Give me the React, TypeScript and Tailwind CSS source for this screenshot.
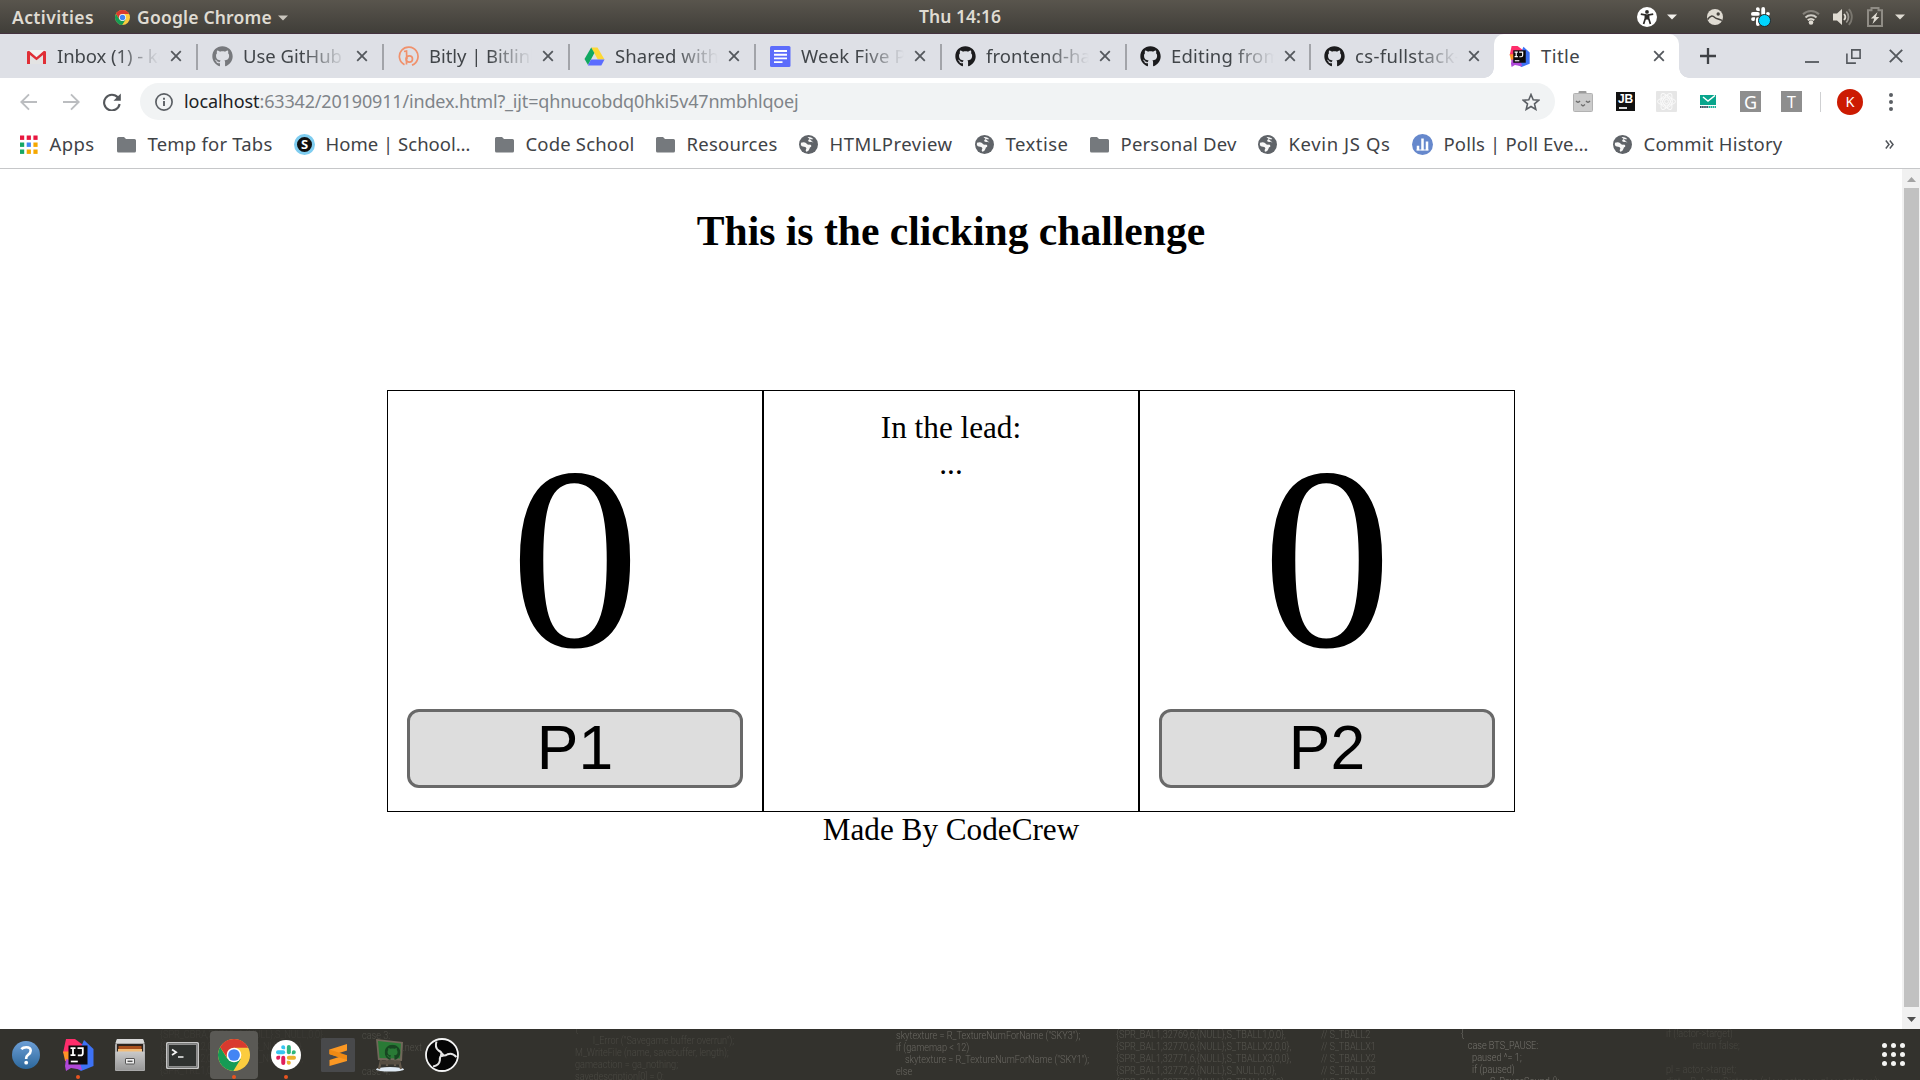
import React, { useLayoutEffect, useRef } from "react";
import { FaGithub } from "react-icons/fa";

const UI = "font-['Noto_Sans','Open_Sans',sans-serif]";

/* Single line of text whose tracking is adjusted so that it spans `w` pixels. */
function Fit({ w, children, className = "" }: { w: number; children: string; className?: string }) {
  const ref = useRef<HTMLSpanElement>(null);
  useLayoutEffect(() => {
    const el = ref.current;
    if (!el) return;
    el.style.letterSpacing = "0px";
    const natural = el.getBoundingClientRect().width;
    el.style.letterSpacing = `${(w - natural) / children.length}px`;
  }, [w, children]);
  return (
    <span ref={ref} className={`inline-block whitespace-pre ${className}`}>
      {children}
    </span>
  );
}

/* ---------- shared icons ---------- */

function Chrome({ className }: { className: string }) {
  return (
    <svg viewBox="0 0 48 48" className={className}>
      <circle cx="24" cy="24" r="24" fill="#fbcc3f" />
      <path d="M3.2 12A24 24 0 0 0 23 48L34 30 24 24 14 29.5z" fill="#169b55" />
      <path d="M3.2 12A24 24 0 0 1 45.2 13H24L13 27z" fill="#d93a2f" />
      <circle cx="24" cy="24" r="11" fill="#fff" />
      <circle cx="24" cy="24" r="8.8" fill="#4285f4" />
    </svg>
  );
}

function SlackMark({ className, mono = false }: { className: string; mono?: boolean }) {
  const c = mono ? ["#fff", "#fff", "#fff", "#fff"] : ["#36c5f0", "#2eb67d", "#ecb22e", "#e01e5a"];
  return (
    <svg viewBox="0 0 24 24" className={className}>
      <g fill={c[0]}>
        <rect x="0" y="6.3" width="11" height="4.8" rx="2.4" />
        <path d="M11 5H8.6A2.4 2.4 0 1 1 11 2.4z" />
      </g>
      <g fill={c[1]}>
        <rect x="13" y="0" width="4.8" height="11" rx="2.4" />
        <path d="M19 11V8.6A2.4 2.4 0 1 1 21.6 11z" />
      </g>
      <g fill={c[2]}>
        <rect x="13" y="13" width="11" height="4.8" rx="2.4" />
        <path d="M13 19h2.4A2.4 2.4 0 1 1 13 21.6z" />
      </g>
      <g fill={c[3]}>
        <rect x="6.3" y="13" width="4.8" height="11" rx="2.4" />
        <path d="M5 13v2.4A2.4 2.4 0 1 1 2.4 13z" />
      </g>
    </svg>
  );
}

function Caret({ className = "" }: { className?: string }) {
  return (
    <svg viewBox="0 0 10 6" className={`h-[6px] w-[10px] ${className}`}>
      <path d="M0 .5h10L5 5.5z" fill="currentColor" />
    </svg>
  );
}

/* ---------- GNOME top bar ---------- */

function TopBar() {
  return (
    <div className={`flex h-[34px] items-center border-b border-[#44323f] bg-gradient-to-b from-[#59554d] to-[#403e39] text-[17.5px] font-semibold text-[#dfdbd2] ${UI}`}>
      <div className="flex w-[919px] items-center pt-[2px] pl-3">
        <Fit w={82}>Activities</Fit>
        <Chrome className="ml-[21px] h-[15px] w-[15px]" />
        <Fit w={135} className="ml-[7px]">Google Chrome</Fit>
        <Caret className="ml-[6px] text-[#c9c5bd]" />
      </div>
      <Fit w={82}>Thu 14:16</Fit>
      <div className="ml-auto flex items-center">
        <svg viewBox="0 0 20 20" className="h-5 w-5">
          <circle cx="10" cy="10" r="10" fill="#fff" />
          <circle cx="10" cy="4.9" r="1.9" fill="#2d2b28" />
          <path d="M3.8 7.2 8.4 8v3.2L6.6 17M16.2 7.2 11.6 8v3.2l1.8 5.8" stroke="#2d2b28" strokeWidth="1.7" fill="none" />
          <path d="M8 7.4h4v5.2H8z" fill="#2d2b28" />
        </svg>
        <Caret className="ml-[10px] text-[#f2f0ec]" />
        <svg viewBox="0 0 16 16" className="ml-[30px] h-4 w-4">
          <circle cx="8" cy="8" r="8" fill="#dfdbd2" />
          <path d="M.6 10.5C3 6.5 5.500 6.300 7.800 8.500 9.500 10 11.500 9.800 15 11.400" stroke="#45423d" strokeWidth="1.5" fill="none" />
          <circle cx="11.200" cy="5" r="1.700" fill="#45423d" />
        </svg>
        <div className="relative ml-[28px] h-5 w-5">
          <SlackMark mono className="h-[19px] w-[19px]" />
          <span className="absolute top-[7px] left-[7px] h-[13px] w-[13px] rounded-full border-[1.5px] border-[#22292c] bg-[#00d5ff]" />
        </div>
        <svg viewBox="0 0 18 16" className="ml-[31px] h-4 w-[18px]" fill="none" strokeWidth="2">
          <path d="M1 5.200a11.500 11.500 0 0 1 16 0" stroke="#85827b" />
          <path d="M3.500 8.400a8 8 0 0 1 11 0" stroke="#cfccc5" />
          <path d="M5.800 11.200a4.600 4.600 0 0 1 6.400 0" stroke="#dfdbd2" />
          <circle cx="9" cy="13.500" r="2.300" fill="#dfdbd2" />
        </svg>
        <svg viewBox="0 0 20 18" className="ml-[13px] h-[18px] w-5" fill="none" strokeWidth="1.8">
          <path d="M0 5.500h4L9 1v16l-5-4.500H0z" fill="#dfdbd2" />
          <path d="M11 6a4.500 4.500 0 0 1 0 6" stroke="#dfdbd2" />
          <path d="M13.300 3.500a8 8 0 0 1 0 11" stroke="#9b9891" />
          <path d="M15.800 1.200a11.500 11.500 0 0 1 0 15.600" stroke="#7a776f" />
        </svg>
        <svg viewBox="0 0 16 20" className="ml-[14px] h-5 w-4">
          <path d="M1 3.200h3.500V1h7v2.200H15V19H1z" fill="none" stroke="#8f8c85" strokeWidth="2" />
          <path d="M10.500 5 3.800 11.500h3.400L5.500 17l6.800-7H8.900z" fill="#dfdbd2" />
        </svg>
        <Caret className="mr-[15px] ml-3 text-[#dfdbd2]" />
      </div>
    </div>
  );
}

/* ---------- browser tabs ---------- */

function Gmail() {
  return (
    <svg viewBox="0 0 21 21" className="h-[21px] w-[21px]">
      <rect x="1" y="4" width="19" height="14" rx="1" fill="#f1f1f1" />
      <path d="M3.500 6 10.500 12l7-6v12h-14z" fill="#e3e3e3" />
      <path d="M1 18V5.500l2-.7 7.500 6.400L18 4.800l2 .7V18h-3V9l-6.500 5.300L4 9v9z" fill="#e02f36" />
    </svg>
  );
}

function Bitly() {
  return (
    <svg viewBox="0 0 21 21" className="h-[21px] w-[21px]" fill="none" stroke="#f0916c" strokeWidth="1.700">
      <path d="M6.500 18.700a9.300 9.300 0 1 1 7.500.4" />
      <path d="M6 5.500 8.500 5l.3 8" />
      <circle cx="11.300" cy="13" r="3.200" />
      <path d="M8.500 12v6.500" />
    </svg>
  );
}

function Drive() {
  return (
    <svg viewBox="0 0 21 21" className="h-[21px] w-[21px]">
      <path d="M7.200 1.500h6.300l7 12h-6.700z" fill="#fdd835" />
      <path d="M7.200 1.500 10.400 7 4 19 .5 13z" fill="#11a861" />
      <path d="M7 13.500h13.500L17.300 19.500H3.800z" fill="#5b6cff" />
    </svg>
  );
}

function Docs() {
  return (
    <svg viewBox="0 0 21 21" className="h-[21px] w-[21px]">
      <rect x="0" y="0" width="20.500" height="21" rx="1.500" fill="#5c6cfb" />
      <path d="M4 5h13M4 8.700h13M4 12.400h13M4 16.100h8.500" stroke="#fff" strokeWidth="1.900" />
    </svg>
  );
}

function Intellij({ className }: { className: string }) {
  return (
    <svg viewBox="0 0 32 32" className={className}>
      <path d="M4 0h9l8 6-6 14-14-6z" fill="#ff2d6b" />
      <path d="M1 12.500h11l-3 14-6-5z" fill="#ff9226" />
      <path d="M22 1l9.500 9v17L19 32l-8-5z" fill="#3d72f5" />
      <path d="M4 20l14 4 2 7-5-1-6-1-5 3-1-5z" fill="#b048d8" />
      <rect x="6.500" y="6.500" width="19" height="19" fill="#0c0a0b" />
      <path d="M8.500 9.200h5M11 9.200v7M8.500 16.200h5M15.500 9.200h5.300v5q0 2.200-2.200 2.200h-2.800" stroke="#fff" strokeWidth="1.800" fill="none" />
      <path d="M8.800 22.500h7" stroke="#fff" strokeWidth="1.700" />
    </svg>
  );
}

function CloseX() {
  return (
    <svg viewBox="0 0 12 12" className="h-3 w-3">
      <path d="M1.200 1.200l9.600 9.600M10.800 1.200l-9.600 9.600" stroke="#54585d" strokeWidth="1.800" />
    </svg>
  );
}

type TabInfo = { width: string; icon: React.ReactNode; text: string; w: number; last?: boolean };

const octo = (color: string) => <FaGithub className={`h-[21px] w-[21px] ${color}`} />;

const tabs: TabInfo[] = [
  { width: "w-[186px]", icon: <Gmail />, text: "Inbox (1) - ke", w: 111 },
  { width: "w-[186px]", icon: octo("text-[#77797d]"), text: "Use GitHub", w: 99 },
  { width: "w-[186px]", icon: <Bitly />, text: "Bitly | Bitlink", w: 111 },
  { width: "w-[186px]", icon: <Drive />, text: "Shared with", w: 104 },
  { width: "w-[186px]", icon: <Docs />, text: "Week Five P", w: 105 },
  { width: "w-[185px]", icon: octo("text-[#1b1b1d]"), text: "frontend-ha", w: 105 },
  { width: "w-[184px]", icon: octo("text-[#1b1b1d]"), text: "Editing from", w: 110 },
  { width: "w-[184px]", icon: octo("text-[#1b1b1d]"), text: "cs-fullstack-", w: 106, last: true },
];

function TabStrip() {
  return (
    <div className={`flex h-[44px] bg-[#dee0e6] pl-[11px] text-[18.5px] text-[#414549] ${UI}`}>
      {tabs.map((t, i) => (
        <div key={t.text} className={`relative flex shrink-0 items-center ${i > 4 ? "pl-[14px]" : "pl-[15px]"} ${t.width}`}>
          {t.icon}
          <div className="ml-[10px] w-[103px] overflow-hidden [mask-image:linear-gradient(to_right,#000_58%,transparent_100%)]">
            <Fit w={t.w}>{t.text}</Fit>
          </div>
          <div className="ml-[10px]"><CloseX /></div>
          {!t.last && <span className="absolute top-[10px] right-[-1px] h-[26px] w-[2px] bg-[#a2a4a9]" />}
        </div>
      ))}
      <div className="relative flex w-[185px] shrink-0 items-center rounded-t-[10px] bg-white pl-[15px]">
        <span className="absolute bottom-0 left-[-10px] h-[10px] w-[10px] bg-[radial-gradient(circle_at_0_0,#dee0e6_9.5px,#fff_10px)]" />
        <span className="absolute right-[-10px] bottom-0 h-[10px] w-[10px] bg-[radial-gradient(circle_at_100%_0,#dee0e6_9.5px,#fff_10px)]" />
        <Intellij className="h-[21px] w-[21px]" />
        <Fit w={39} className="ml-[11px]">Title</Fit>
        <div className="mr-[14px] ml-auto"><CloseX /></div>
      </div>
      <div className="flex grow items-center pl-[21px] text-[#54585d]">
        <svg viewBox="0 0 16 16" className="h-4 w-4">
          <path d="M8 0v16M0 8h16" stroke="#3f4246" strokeWidth="2.300" />
        </svg>
        <svg viewBox="0 0 14 14" className="ml-[89px] h-[14px] w-[14px]">
          <path d="M0 13h14" stroke="currentColor" strokeWidth="1.800" />
        </svg>
        <svg viewBox="0 0 15 15" className="ml-[27px] h-[15px] w-[15px]" fill="none" stroke="currentColor" strokeWidth="1.600">
          <path d="M5.800.9h8.300v8.300H5.800z" />
          <path d="M.9 4.500v9.600h9" />
        </svg>
        <svg viewBox="0 0 14 14" className="ml-[28px] h-[14px] w-[14px]">
          <path d="M.8.8l12.400 12.400M13.200.8.8 13.200" stroke="currentColor" strokeWidth="1.900" />
        </svg>
      </div>
    </div>
  );
}

/* ---------- toolbar ---------- */

function Toolbar() {
  return (
    <div className={`flex h-[47px] items-center bg-white pl-5 ${UI}`}>
      <svg viewBox="0 0 18 18" className="h-[18px] w-[18px]" fill="none" stroke="#bbbdc0" strokeWidth="1.900">
        <path d="M17 9H1.500M9 1.300 1.300 9 9 16.700" />
      </svg>
      <svg viewBox="0 0 18 18" className="ml-6 h-[18px] w-[18px]" fill="none" stroke="#bbbdc0" strokeWidth="1.900">
        <path d="M1 9h15.500M9 1.300 16.700 9 9 16.700" />
      </svg>
      <svg viewBox="0 0 18 18" className="ml-[23px] h-[18px] w-[18px]">
        <path d="M15 4.700A7.800 7.800 0 1 0 16.600 11" fill="none" stroke="#54575b" strokeWidth="2.100" />
        <path d="M17.800.5v7.300h-7.300z" fill="#54575b" />
      </svg>
      <div className="ml-[19px] flex h-[37px] w-[1415px] items-center rounded-full bg-[#f1f3f4] pl-[15px] text-[18px]">
        <svg viewBox="0 0 18 18" className="h-[18px] w-[18px]" fill="none" stroke="#5b5f64" strokeWidth="1.700">
          <circle cx="9" cy="9" r="8.100" />
          <path d="M9 8v5M9 4.800v1.900" strokeWidth="1.900" />
        </svg>
        <Fit w={75.500} className="ml-[11px] text-[#202124]">localhost</Fit>
        <Fit w={539} className="text-[#7f8489]">:63342/20190911/index.html?_ijt=qhnucobdq0hki5v47nmbhlqoej</Fit>
        <svg viewBox="0 0 18 18" className="mr-[15px] ml-auto h-[18px] w-[18px]">
          <path d="M9 1.500l2.200 5.200 5.600.5-4.300 3.700 1.300 5.500L9 13.500l-4.800 2.900 1.300-5.500L1.200 7.200l5.600-.5z" fill="none" stroke="#5b5f64" strokeWidth="1.600" />
        </svg>
      </div>
      <svg viewBox="0 0 20 21" className="ml-[18px] h-[21px] w-5">
        <rect x="5.500" y="0" width="8" height="4" rx="1" fill="#9b9b9b" />
        <rect x=".5" y="2.500" width="19" height="18" rx="1" fill="#cbcbcb" stroke="#b2b2b2" />
        <path d="M3 10q2 2.500 4 0M13 10q2 2.500 4 0M8 13.500l2 1.500 2-1.500" stroke="#6b6b6b" strokeWidth="1.300" fill="none" />
      </svg>
      <div className="ml-[23px] flex h-[19px] w-[19px] flex-col items-center bg-[#111] font-['Liberation_Sans',sans-serif] text-[12px] leading-[14px] font-bold text-white">
        <Fit w={15}>JB</Fit>
        <span className="mt-px mr-[6px] h-[2px] w-2 bg-[#ddd]" />
      </div>
      <svg viewBox="0 0 21 21" className="ml-[21px] h-[21px] w-[21px]" fill="none" stroke="#fafafa" strokeWidth="1">
        <rect width="21" height="21" rx="1" fill="#e6e6e6" stroke="none" />
        <ellipse cx="10.500" cy="10.500" rx="9" ry="3.700" />
        <ellipse cx="10.500" cy="10.500" rx="9" ry="3.700" transform="rotate(60 10.500 10.500)" />
        <ellipse cx="10.500" cy="10.500" rx="9" ry="3.700" transform="rotate(120 10.500 10.500)" />
        <circle cx="10.500" cy="10.500" r="6" />
        <circle cx="10.500" cy="10.500" r="2" />
      </svg>
      <svg viewBox="0 0 16 14" className="ml-[23px] h-[14px] w-4">
        <rect width="16" height="10" fill="#08a58c" />
        <path d="M3 2l5 4 7-5.500" stroke="#fff" strokeWidth="1.500" fill="none" />
        <path d="M0 12h8" stroke="#334a5c" strokeWidth="2" strokeDasharray="1.600 .5" />
        <path d="M8.500 12H16" stroke="#1bb39b" strokeWidth="2" strokeDasharray="1.600 .5" />
      </svg>
      <div className="ml-6 grid h-[21px] w-[21px] place-items-center bg-[#8e8e8e] text-[18px] leading-none text-white">G</div>
      <div className="ml-5 grid h-[21px] w-[21px] place-items-center bg-[#8e8e8e] text-[16px] leading-none text-white">T</div>
      <span className="ml-[18px] h-5 w-px bg-[#cfd0d2]" />
      <div className="ml-4 grid h-[26px] w-[26px] place-items-center rounded-full bg-[#cc1b02] text-[14.5px] leading-none text-white">K</div>
      <div className="ml-[26px] flex flex-col gap-[3px]">
        <span className="h-1 w-1 rounded-full bg-[#5b5f64]" />
        <span className="h-1 w-1 rounded-full bg-[#5b5f64]" />
        <span className="h-1 w-1 rounded-full bg-[#5b5f64]" />
      </div>
    </div>
  );
}

/* ---------- bookmarks ---------- */

const appColors = ["#e8173f", "#e8173f", "#e8173f", "#16a765", "#4285f4", "#f5a800", "#16a765", "#f5a800", "#f5a800"];

function Apps() {
  return (
    <svg viewBox="0 0 21 21" className="h-[21px] w-[21px]">
      {appColors.map((c, i) => (
        <rect key={i} x={2 + (i % 3) * 6.700} y={1.500 + Math.floor(i / 3) * 7} width="4.200" height="4.400" fill={c} />
      ))}
    </svg>
  );
}

function Folder() {
  return (
    <svg viewBox="0 0 21 21" className="h-[21px] w-[21px]">
      <path d="M1 4.500q0-1.500 1.500-1.500h5.500l2 2h8.500q1.500 0 1.500 1.500v10.500q0 1.500-1.500 1.500h-16Q1 18.500 1 17z" fill="#75797d" />
    </svg>
  );
}

function Globe() {
  return (
    <svg viewBox="0 0 21 21" className="h-[21px] w-[21px]">
      <circle cx="10.500" cy="10.500" r="9.500" fill="#5f6368" />
      <path d="M3 8.800q3-1.300 5 .2 1.300 2.300 4 1.500 1.800.5 1.200 2.300-1.700.5-1.800 2.200-.8 2.600-3.200 2.800-1.200-1.200.2-3.200-.2-1.900-2.400-1.800-2.600-.2-3.200-1.800zM9.500 3q3.500-.5 5.800 2-1 .4-2.500 0-2.600.2-2.800 2 1.600 1.300 3.500.8 2.300.6 3.600 2.500" fill="#fff" fillOpacity=".95" />
    </svg>
  );
}

function Schoology() {
  return (
    <div className="grid h-[21px] w-[21px] place-items-center rounded-full border-[3px] border-[#7fcdf0] bg-[#111] text-[13px] leading-none font-bold text-white">
      S
    </div>
  );
}

function PollIcon() {
  return (
    <svg viewBox="0 0 21 21" className="h-[21px] w-[21px]">
      <circle cx="10.500" cy="10.500" r="10.500" fill="#6688cc" />
      <path d="M6 16.300v-4.500M10.500 16.300V4.500M15 16.300V7.500" stroke="#fff" strokeWidth="2.500" />
      <path d="M4.500 16h12" stroke="#fff" />
    </svg>
  );
}

const bookmarks = [
  { box: "w-[98px]", icon: <Apps />, text: "Apps", w: 45 },
  { box: "w-[178px]", icon: <Folder />, text: "Temp for Tabs", w: 125 },
  { box: "w-[200px]", icon: <Schoology />, text: "Home | School…", w: 145 },
  { box: "w-[161px]", icon: <Folder />, text: "Code School", w: 109 },
  { box: "w-[143px]", icon: <Folder />, text: "Resources", w: 91 },
  { box: "w-[176px]", icon: <Globe />, text: "HTMLPreview", w: 123 },
  { box: "w-[115px]", icon: <Globe />, text: "Textise", w: 63 },
  { box: "w-[168px]", icon: <Folder />, text: "Personal Dev", w: 116 },
  { box: "w-[155px]", icon: <Globe />, text: "Kevin JS Qs", w: 102 },
  { box: "w-[200px]", icon: <PollIcon />, text: "Polls | Poll Eve…", w: 145 },
  { box: "w-[200px]", icon: <Globe />, text: "Commit History", w: 139 },
];

function Bookmarks() {
  return (
    <div className={`flex h-[44px] items-center border-b border-[#c6c7c9] bg-white pb-[4px] pl-[18px] text-[18.5px] text-[#3f4347] ${UI}`}>
      {bookmarks.map((b) => (
        <div key={b.text} className={`flex shrink-0 items-center ${b.box}`}>
          {b.icon}
          <Fit w={b.w} className="ml-[10.500px] pb-[2px]">{b.text}</Fit>
        </div>
      ))}
      <svg viewBox="0 0 9 9" className="ml-[73px] h-[9px] w-[9px]" fill="none" stroke="#505459" strokeWidth="1.500">
        <path d="M.8.600 4 4.500.8 8.400M4.800.600 8 4.500 4.800 8.400" />
      </svg>
    </div>
  );
}

/* ---------- page ---------- */

function Player({ label }: { label: string }) {
  return (
    <div className="flex h-[422px] w-[376px] flex-col border border-black px-[19px] pt-[19px]">
      <div className="h-[299px] text-center text-[260px] leading-[296px]">0</div>
      <button className="h-[79px] w-full rounded-[12px] border-[3px] border-[#696969] bg-[#ddd] pb-[2px] font-['Liberation_Sans',Arial,sans-serif] text-[62.4px] leading-[70px]">
        {label}
      </button>
    </div>
  );
}

function Page() {
  return (
    <div className="flex h-[860px] bg-white text-black">
      <main className="flex w-[1902px] flex-col items-center font-['Liberation_Serif','Times_New_Roman',serif] text-[31.2px] leading-[36px]">
        <h1 className="mt-[38px] text-[41.6px] leading-[48px] font-bold">This is the clicking challenge</h1>
        <div className="mt-[135px] flex">
          <Player label="P1" />
          <div className="h-[422px] w-[376px] border border-black pt-[19px] text-center">
            <div>In the lead:</div>
            <div>...</div>
          </div>
          <Player label="P2" />
        </div>
        <div>Made By CodeCrew</div>
      </main>
      <div className="flex w-[18px] flex-col items-center bg-[#f1f1f1]">
        <svg viewBox="0 0 9 5" className="mt-2 h-[5px] w-[9px] shrink-0"><path d="M0 5 4.500 0 9 5z" fill="#a3a3a3" /></svg>
        <div className="mt-[6px] h-[819px] w-[15px] bg-[#c1c1c1]" />
        <svg viewBox="0 0 9 5" className="mt-auto mb-[7px] h-[5px] w-[9px] shrink-0"><path d="M0 0h9L4.500 5z" fill="#505050" /></svg>
      </div>
    </div>
  );
}

/* ---------- dock ---------- */

const wallpaper = [
  { at: "left-[575px] top-[-6px] text-[#4a4943]", text: "{\n        I_Error (\"Savegame buffer overrun\");\nM_WriteFile (name, savebuffer, length);\ngameaction = ga_nothing;\nsavedescription[0] = 0;" },
  { at: "left-[896px] top-[1px] text-[#6a6862]", text: "skytexture = R_TextureNumForName (\"SKY3\");\nif (gamemap < 12)\n    skytexture = R_TextureNumForName (\"SKY1\");\nelse" },
  { at: "left-[1116px] top-0 text-[#56554f]", text: "{SPR_BAL1,32769,6,{NULL},S_TBALL1,0,0},\n{SPR_BAL1,32770,6,{NULL},S_TBALLX2,0,0},\n{SPR_BAL1,32771,6,{NULL},S_TBALLX3,0,0},\n{SPR_BAL1,32772,6,{NULL},S_NULL,0,0},\n{SPR_BAL1,32773,6,{NULL},S_TBALL2,0,0}," },
  { at: "left-[1321px] top-0 text-[#56554f]", text: "// S_TBALL2\n// S_TBALLX1\n// S_TBALLX2\n// S_TBALLX3\n// S_TBALL1" },
  { at: "left-[1461px] top-[-1px] text-[#75736d]", text: "{\n   case BTS_PAUSE:\n     paused ^= 1;\n     if (paused)\n             S_PauseSound ();" },
  { at: "left-[1666px] top-[-1px] text-[#484741]", text: "if (!actor->target)\n            return false;\n\npl = actor->target;\ndist = P_AproxDistance (pl->x-actor->x, pl->y-actor->y);" },
  { at: "left-[160px] top-0 text-[#3e3d38]", text: "{SPR_CBRA,32768,-1,{NULL},S_NULL,0,0},\n{SPR_COL2,0,-1,{NULL},S_NULL,0,0},\n{SPR_TRE2,0,-1,{NULL},S_NULL,0,0},\n{SPR_TRE1,0,-1,{NULL}}" },
  { at: "left-[362px] top-[1px] text-[#504f49]", text: "case 3:\n                p.next\n\ncase 4:" },
];

function Running() {
  return <span className="absolute bottom-[1px] left-1/2 h-1 w-1 -translate-x-1/2 rounded-full bg-[#e95420]" />;
}

function Dock() {
  return (
    <div className="relative flex h-[51px] items-center overflow-hidden bg-[#33322d]">
      {wallpaper.map((c) => (
        <pre key={c.at} className={`absolute origin-left scale-x-[.83] font-['Roboto',sans-serif] text-[11px] leading-[12px] font-light ${c.at}`}>{c.text}</pre>
      ))}
      <div className="relative flex h-[51px] items-center">
        <div className="grid w-[52px] place-items-center">
          <svg viewBox="0 0 30 30" className="mt-px h-[30px] w-[30px]">
            <defs><linearGradient id="help" x1="0" x2="0" y1="0" y2="1"><stop stopColor="#6d9fd6" /><stop offset="1" stopColor="#2c679b" /></linearGradient></defs>
            <circle cx="15" cy="15" r="14" fill="url(#help)" />
            <path d="M10.300 9.200Q12 7.200 15.300 7.200q4.400 0 4.400 3.600 0 2.300-2.600 4-1.900 1.300-1.900 3.300v.9" fill="none" stroke="#fff" strokeWidth="2.600" />
            <circle cx="15.200" cy="22.700" r="1.900" fill="#fff" />
          </svg>
        </div>
        <div className="relative grid h-full w-[52px] place-items-center">
          <Intellij className="h-8 w-8" />
          <Running />
        </div>
        <div className="grid w-[52px] place-items-center">
          <svg viewBox="0 0 30 32" className="h-8 w-[30px]">
            <defs><linearGradient id="cab" x1="0" x2="0" y1="0" y2="1"><stop stopColor="#c9c9c9" /><stop offset="1" stopColor="#989898" /></linearGradient></defs>
            <path d="M2 0h26l2 6v25q0 1-1 1H1q-1 0-1-1V6z" fill="#aaa" />
            <path d="M2 0h26l1.500 4h-29z" fill="#d8d8d8" />
            <rect x="2" y="5" width="26" height="8" fill="#2d241f" />
            <path d="M3.500 7h23v6h-23z" fill="#a84f1d" />
            <path d="M3 10h24v3H3z" fill="#f2bd78" />
            <rect x=".5" y="12.500" width="29" height="18.500" rx="1" fill="url(#cab)" />
            <rect x="10.500" y="19.500" width="9" height="5.500" rx=".5" fill="#eee" stroke="#555" />
            <path d="M12.500 22.300h5" stroke="#555" strokeWidth="1.500" />
          </svg>
        </div>
        <div className="grid w-[52px] place-items-center">
          <svg viewBox="0 0 33 27" className="mt-[2px] h-[27px] w-[33px]">
            <rect x=".8" y=".8" width="31.400" height="25.400" rx=".8" fill="#2f3230" stroke="#c7c7c7" strokeWidth="1.600" />
            <rect x="2.500" y="2.500" width="28" height="22" fill="none" stroke="#8e8e8e" />
            <path d="M6 7.500l4.200 2.700L6 13M12 15h5.500" fill="none" stroke="#f2f2f2" strokeWidth="1.700" />
          </svg>
        </div>
        <div className="relative grid h-full w-[52px] place-items-center">
          <div className="absolute top-[2px] left-[2px] h-12 w-12 rounded-[4px] bg-[#5a5955]" />
          <Chrome className="relative h-8 w-8" />
          <Running />
        </div>
        <div className="relative grid h-full w-[52px] place-items-center">
          <div className="grid h-[30px] w-[30px] place-items-center rounded-full bg-white">
            <SlackMark className="h-5 w-5" />
          </div>
          <Running />
        </div>
        <div className="grid w-[52px] place-items-center">
          <svg viewBox="0 0 34 34" className="h-[34px] w-[34px]">
            <rect width="34" height="34" rx="1.500" fill="#48494b" />
            <path d="M8.500 11.500 26 6v6.500l-9.500 3L26 18v5L8.500 28v-6l9.500-3-9.500-3z" fill="#fb9823" />
            <path d="M8.500 11.500v4.800L26 22v-4.700z" fill="#ef8a14" />
          </svg>
        </div>
        <div className="grid w-[52px] place-items-center">
          <svg viewBox="0 0 30 34" className="h-[34px] w-[30px]">
            <ellipse cx="15" cy="31.300" rx="14" ry="2.300" fill="#dfe9f3" />
            <path d="M6 22 4 31M24 22l2 9M12 22v6M20 22v6" stroke="#675c4e" strokeWidth="2.200" />
            <path d="M1 1l27 3-1 19-24-1z" fill="#71685a" />
            <path d="M3 3l23 2.500-1 15L4.500 20z" fill="#297a35" />
            <path d="M5 24.500h20" stroke="#554d42" strokeWidth="4" />
            <FaGithub x={9.5} y={6.5} width={11} height={11} color="#184622" />
          </svg>
        </div>
        <div className="grid w-[52px] place-items-center">
          <svg viewBox="0 0 34 34" className="h-[34px] w-[34px]">
            <circle cx="17" cy="17" r="16" fill="#050505" stroke="#f4f4f4" strokeWidth="1.800" />
            <g fill="none" stroke="#e4e4e4" strokeWidth="2">
              <path d="M17 17Q17 14 13.500 12.500 9.500 9.500 11.500 3.500" />
              <path d="M17 17Q17 14 13.500 12.500 9.500 9.500 11.500 3.500" transform="rotate(120 17 17)" />
              <path d="M17 17Q17 14 13.500 12.500 9.500 9.500 11.500 3.500" transform="rotate(240 17 17)" />
            </g>
            <circle cx="17" cy="17" r="2" fill="#e4e4e4" />
          </svg>
        </div>
      </div>
      <div className="relative mr-[15px] ml-auto grid grid-cols-3 gap-x-[4px] gap-y-[4px]">
        {appColors.map((_, i) => (
          <span key={i} className="h-[5px] w-[5px] rounded-full bg-[#f5f5f3]" />
        ))}
      </div>
    </div>
  );
}

export default function App() {
  return (
    <div className="flex h-[1080px] w-[1920px] flex-col overflow-hidden bg-white">
      <TopBar />
      <TabStrip />
      <Toolbar />
      <Bookmarks />
      <Page />
      <Dock />
    </div>
  );
}
